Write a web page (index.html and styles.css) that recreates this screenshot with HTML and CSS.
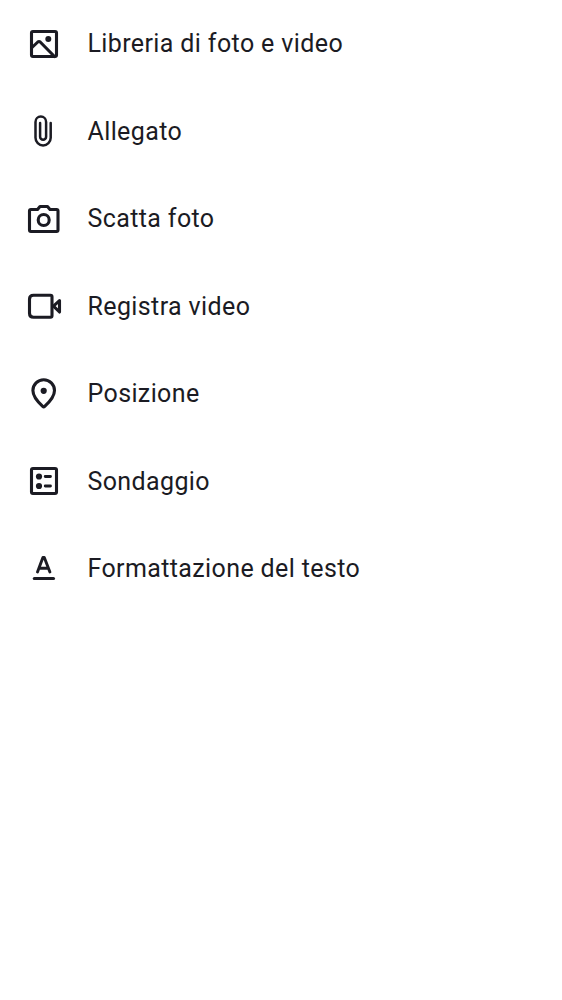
FILE: index.html
```html
<!DOCTYPE html>
<html lang="it">
<head>
<meta charset="utf-8">
<title>Allegati</title>
<link rel="stylesheet" href="styles.css">
</head>
<body>
<ul class="menu">
<li class="item"><svg class="icon" viewBox="24 24 40 40"><rect x="31.500" y="31.500" width="25" height="25" rx="1.500"/><path d="M32 47.500L37.800 42Q39 41 40.200 42L54.500 56.500"/><circle class="fill" cx="48.300" cy="39" r="3"/></svg><span>Libreria di foto e video</span></li>
<li class="item"><svg class="icon thin" viewBox="24 24 40 40"><path d="M50.700 36v14.800a7.600 7.600 0 0 1-15.200 0V34.900a5.300 5.300 0 0 1 10.600 0V49.700a3 3 0 0 1-6 0V36"/></svg><span>Allegato</span></li>
<li class="item"><svg class="icon" viewBox="24 24 40 40"><path d="M31 34.500H37.500L40 31.500H47.500L50 34.500H56.500Q58 34.500 58 36V55Q58 56.500 56.500 56.500H31Q29.500 56.500 29.500 55V36Q29.500 34.500 31 34.500Z"/><circle cx="43.700" cy="45" r="5.500"/></svg><span>Scatta foto</span></li>
<li class="item"><svg class="icon" viewBox="24 24 40 40"><path d="M33.500 33.200H50.500Q52 33.200 52 34.700V53.700Q52 55.200 50.500 55.200H33.500Q29.500 55.200 29.500 51.200V37.200Q29.500 33.200 33.500 33.200Z"/><path d="M59.500 38.500L53.500 44.200L59.500 50Z"/></svg><span>Registra video</span></li>
<li class="item"><svg class="icon" viewBox="24 24 40 40"><path d="M42.700 56.400C39 53 32.900 47 32.900 40.500a10.800 10.800 0 0 1 21.600 0C54.500 47 48.400 53 44.700 56.400Q43.700 57.300 42.700 56.400Z"/><circle class="fill" cx="43.700" cy="40.800" r="3.100"/></svg><span>Posizione</span></li>
<li class="item"><svg class="icon" viewBox="24 24 40 40"><rect x="31.500" y="31.500" width="25" height="25" rx="1.500"/><circle class="fill" cx="39" cy="39.500" r="3.100"/><circle class="fill" cx="39" cy="49" r="3.100"/><path class="bar" d="M45.200 39.500H50.500M45.200 49H50.500"/></svg><span>Sondaggio</span></li>
<li class="item"><svg class="icon" viewBox="24 24 40 40"><path class="letter" d="M37.500 47L42.900 32.400H44.300L49.900 47M39.500 43.200H47.800"/><path d="M34.300 53.500H53.500"/></svg><span>Formattazione del testo</span></li>
</ul>
</body>
</html>
```
FILE: styles.css
```css
body { margin: 0; background: #fff; color: #1b1b23; font: 25px/40px Roboto, sans-serif; letter-spacing: 0.38px; }
.menu { list-style: none; margin: 0; padding: 0; }
.item { display: flex; align-items: center; height: 87.5px; padding-left: 24px; gap: 23.5px; white-space: nowrap; }
.item span { padding-top: 1px; }
.icon { width: 40px; height: 40px; fill: none; stroke: currentColor; stroke-width: 3.1; stroke-linecap: round; stroke-linejoin: round; }
.thin { stroke-width: 2.5; }
.letter { stroke-width: 2.9; }
.bar { stroke-width: 2.8; }
.fill { fill: currentColor; stroke: none; }
```
